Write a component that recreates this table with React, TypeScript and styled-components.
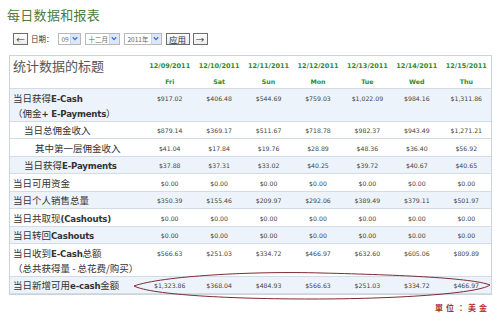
import styled, { createGlobalStyle } from "styled-components";

const GlobalStyle = createGlobalStyle`
  body {
    margin: 0;
    background: #fff;
    font-family: "Noto Sans CJK SC", "DejaVu Sans", sans-serif;
  }
`;

const Page = styled.div`
  width: 500px;
  height: 325px;
  padding: 7px 0 0 9px;
  box-sizing: border-box;
  overflow: hidden;
`;

const PageTitle = styled.h1`
  margin: 0 0 0 -2px;
  font-family: "Noto Sans CJK SC", serif;
  font-size: 13px;
  line-height: 16px;
  font-weight: 400;
  color: #4f7a3a;
  letter-spacing: 0.3px;
`;

const Toolbar = styled.div`
  display: flex;
  align-items: center;
  gap: 3px;
  height: 13px;
  margin: 9px 0 0 4px;
`;

const NavButton = styled.div<{ wide?: boolean }>`
  display: flex;
  align-items: center;
  justify-content: center;
  height: 12px;
  width: ${(p) => (p.wide ? "24px" : "15px")};
  box-sizing: border-box;
  border: 1px solid #6d6d6d;
  background: linear-gradient(#fdfdfd, #ececec);
  font-size: 8.5px;
  line-height: 10px;
  color: #333;
`;

const DateLabel = styled.span`
  font-size: 7.5px;
  color: #333;
  margin: 0 1px 0 0;
`;

const Select = styled.div<{ w: number }>`
  display: flex;
  align-items: center;
  justify-content: space-between;
  width: ${(p) => p.w}px;
  height: 12px;
  box-sizing: border-box;
  border: 1px solid #b8b8b8;
  background: #fff;
  padding-left: 3px;
  margin-right: 1px;
  font-size: 6.5px;
  color: #666;
`;

const SelectArrow = styled.span`
  display: flex;
  align-items: center;
  justify-content: center;
  width: 9px;
  height: 10px;
  background: #dde7f7;
  border-left: 1px solid #c8d4ea;
`;

const TableBox = styled.div`
  position: relative;
  margin-top: 10px;
  width: 483px;
  border: 1px solid #cbd3dd;
  box-sizing: border-box;
`;

const Table = styled.table`
  width: 100%;
  table-layout: fixed;
  border-collapse: collapse;
`;

const TitleCell = styled.th`
  text-align: left;
  vertical-align: top;
  padding: 1px 0 0 3px;
  font-size: 13px;
  line-height: 17px;
  font-weight: 400;
  color: #555;
  border-bottom: 1px solid #d3dbe6;
`;

const HeadCell = styled.th`
  text-align: center;
  vertical-align: top;
  padding: 5px 0 1px;
  border-bottom: 1px solid #d3dbe6;
  font-family: "DejaVu Sans", sans-serif;
  font-weight: 700;
  color: #2f8a2f;
`;

const DateText = styled.div`
  font-size: 6.5px;
  line-height: 11px;
`;

const DayText = styled.div`
  font-size: 6.3px;
  line-height: 11px;
  margin-top: 4px;
`;

const Row = styled.tr<{ shaded?: boolean }>`
  background: ${(p) => (p.shaded ? "#edf3fb" : "#fff")};
`;

const LabelCell = styled.td<{ indent?: number }>`
  vertical-align: top;
  padding: 1.5px 0 0 ${(p) => 3 + (p.indent || 0) * 11}px;
  font-size: 9.5px;
  line-height: 15px;
  color: #333;
  white-space: nowrap;
  border-bottom: 1px solid #d3dbe6;
`;

const Line = styled.div`
  height: 15px;
  overflow: hidden;

  b {
    font-family: "DejaVu Sans", sans-serif;
    font-size: 8.6px;
    font-weight: 700;
    letter-spacing: -0.2px;
  }
`;

const Cell = styled.td`
  vertical-align: top;
  text-align: center;
  padding: 1.5px 0 0;
  font-family: "DejaVu Sans", sans-serif;
  font-size: 6.2px;
  line-height: 15px;
  height: 15px;
  color: #444;
  border-bottom: 1px solid #d3dbe6;
`;

const Ring = styled.svg`
  position: absolute;
  left: 122px;
  top: 216px;
  overflow: visible;
  pointer-events: none;
`;

const Unit = styled.div`
  width: 481px;
  text-align: right;
  margin-top: 8px;
  font-family: "Noto Sans CJK TC", serif;
  font-size: 8px;
  line-height: 10px;
  font-weight: 700;
  letter-spacing: 3px;
  color: #a8322a;
`;

const dates = [
  ["12/09/2011", "Fri"],
  ["12/10/2011", "Sat"],
  ["12/11/2011", "Sun"],
  ["12/12/2011", "Mon"],
  ["12/13/2011", "Tue"],
  ["12/14/2011", "Wed"],
  ["12/15/2011", "Thu"],
];

type RowData = { lines: React.ReactNode[]; indent?: number; values: string[] };

const rows: RowData[] = [
  {
    lines: [
      <>
        当日获得<b>E-Cash</b>
      </>,
      <>
        （佣金<b>+ E-Payments</b>）
      </>,
    ],
    values: ["$917.02", "$406.48", "$544.69", "$759.03", "$1,022.09", "$984.16", "$1,311.86"],
  },
  {
    lines: ["当日总佣金收入"],
    indent: 1,
    values: ["$879.14", "$369.17", "$511.67", "$718.78", "$982.37", "$943.49", "$1,271.21"],
  },
  {
    lines: ["其中第一层佣金收入"],
    indent: 2,
    values: ["$41.04", "$17.84", "$19.76", "$28.89", "$48.36", "$36.40", "$56.92"],
  },
  {
    lines: [
      <>
        当日获得<b>E-Payments</b>
      </>,
    ],
    indent: 1,
    values: ["$37.88", "$37.31", "$33.02", "$40.25", "$39.72", "$40.67", "$40.65"],
  },
  {
    lines: ["当日可用资金"],
    values: ["$0.00", "$0.00", "$0.00", "$0.00", "$0.00", "$0.00", "$0.00"],
  },
  {
    lines: ["当日个人销售总量"],
    values: ["$350.39", "$155.46", "$209.97", "$292.06", "$389.49", "$379.11", "$501.97"],
  },
  {
    lines: [
      <>
        当日共取现<b>(Cashouts)</b>
      </>,
    ],
    values: ["$0.00", "$0.00", "$0.00", "$0.00", "$0.00", "$0.00", "$0.00"],
  },
  {
    lines: [
      <>
        当日转回<b>Cashouts</b>
      </>,
    ],
    values: ["$0.00", "$0.00", "$0.00", "$0.00", "$0.00", "$0.00", "$0.00"],
  },
  {
    lines: [
      <>
        当日收到<b>E-Cash</b>总额
      </>,
      "（总共获得量 - 总花费/购买）",
    ],
    values: ["$566.63", "$251.03", "$334.72", "$466.97", "$632.60", "$605.06", "$809.89"],
  },
  {
    lines: [
      <>
        当日新增可用<b>e-cash</b>金额
      </>,
    ],
    values: ["$1,323.86", "$368.04", "$484.93", "$566.63", "$251.03", "$334.72", "$466.97"],
  },
];

const Chevron = () => (
  <svg width="6" height="5" viewBox="0 0 6 5">
    <path d="M0.8 1.2 L3 3.6 L5.2 1.2" fill="none" stroke="#3d6fc9" strokeWidth="1.3" />
  </svg>
);

function DailyReport() {
  return (
    <Page>
      <PageTitle>每日数据和报表</PageTitle>
      <Toolbar>
        <NavButton>←</NavButton>
        <DateLabel>日期：</DateLabel>
        <Select w={23}>
          09
          <SelectArrow>
            <Chevron />
          </SelectArrow>
        </Select>
        <Select w={35}>
          十二月
          <SelectArrow>
            <Chevron />
          </SelectArrow>
        </Select>
        <Select w={38}>
          2011年
          <SelectArrow>
            <Chevron />
          </SelectArrow>
        </Select>
        <NavButton wide>应用</NavButton>
        <NavButton>→</NavButton>
      </Toolbar>

      <TableBox>
        <Table>
          <colgroup>
            <col style={{ width: 135 }} />
            {dates.map((d) => (
              <col key={d[0]} />
            ))}
          </colgroup>
          <thead>
            <tr>
              <TitleCell>统计数据的标题</TitleCell>
              {dates.map(([date, day]) => (
                <HeadCell key={date}>
                  <DateText>{date}</DateText>
                  <DayText>{day}</DayText>
                </HeadCell>
              ))}
            </tr>
          </thead>
          <tbody>
            {rows.map((row, i) => (
              <Row key={i} shaded={[0, 3, 5, 7, 9].includes(i)}>
                <LabelCell indent={row.indent}>
                  {row.lines.map((l, k) => (
                    <Line key={k}>{l}</Line>
                  ))}
                </LabelCell>
                {row.values.map((v, j) => (
                  <Cell key={j}>{v}</Cell>
                ))}
              </Row>
            ))}
          </tbody>
        </Table>
        <Ring width="360" height="26" viewBox="0 0 360 26">
          <path
            d="M2 14 C 30 4, 120 -1, 190 1 C 270 3, 340 6, 358 13 C 345 22, 260 27, 180 27 C 100 27, 20 23, 2 14 Z"
            fill="none"
            stroke="#7d2a33"
            strokeWidth="1"
          />
        </Ring>
      </TableBox>
      <Unit>單位：美金</Unit>
    </Page>
  );
}

export default function App() {
  return (
    <>
      <GlobalStyle />
      <DailyReport />
    </>
  );
}
